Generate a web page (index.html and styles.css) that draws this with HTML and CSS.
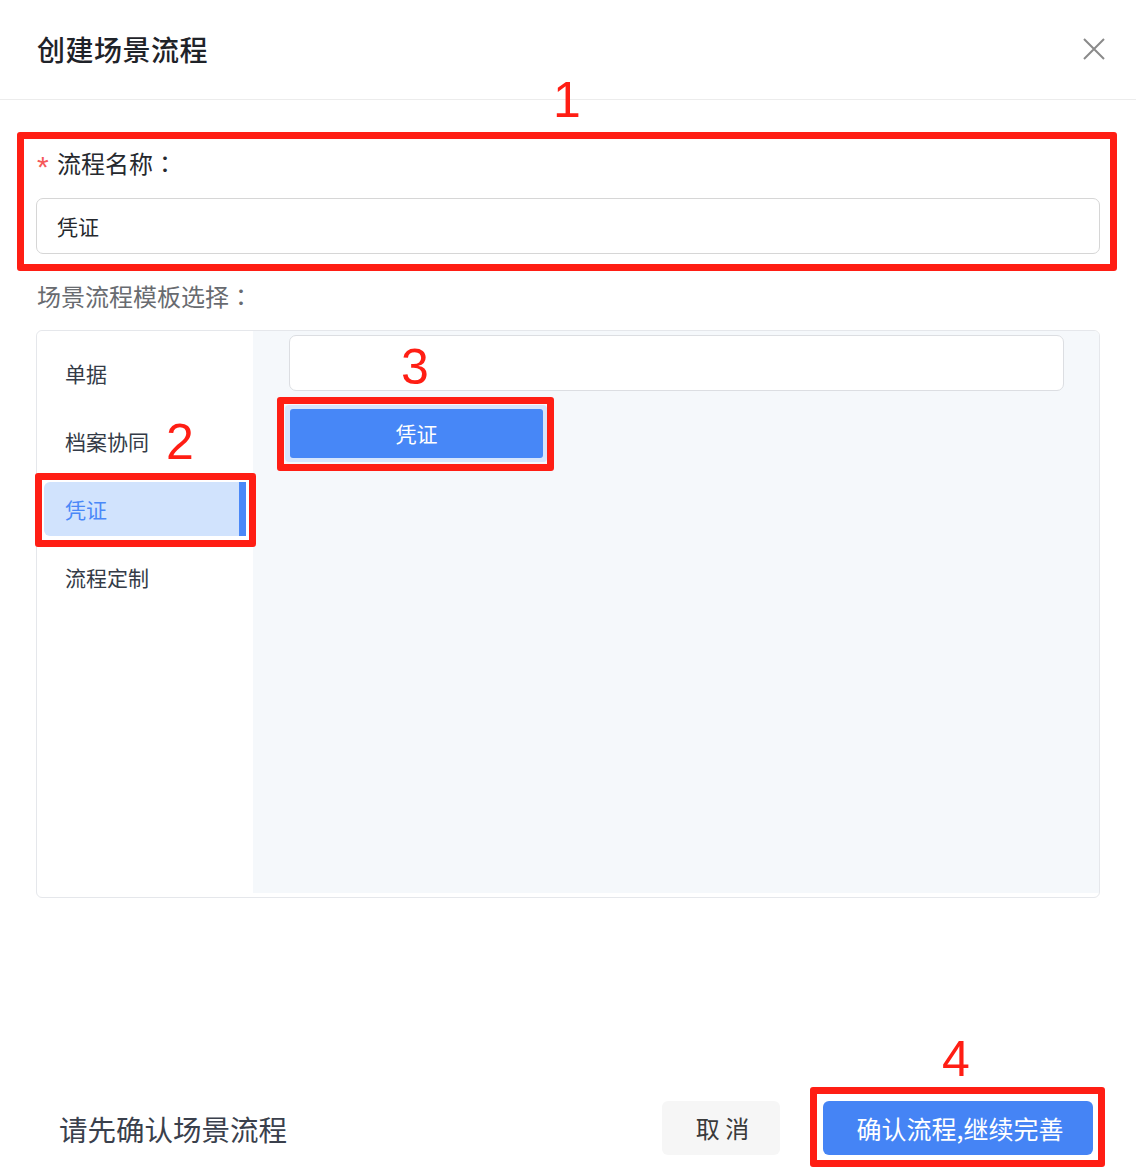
FILE: index.html
```html
<!DOCTYPE html>
<html lang="zh">
<head>
<meta charset="utf-8">
<title>创建场景流程</title>
<link rel="stylesheet" href="styles.css">
</head>
<body>
<div class="dialog">
  <div class="header">
    <div class="title">创建场景流程</div>
    <svg class="close" width="22" height="22" viewBox="0 0 22 22"><path d="M1 1L21 21M21 1L1 21" stroke="#8a8a8a" stroke-width="2" fill="none"/></svg>
  </div>

  <div class="body">
    <div class="label label-required"><span class="star">*</span>流程名称<span class="colon">：</span></div>
    <div class="input">凭证</div>

    <div class="label label-sub">场景流程模板选择<span class="colon">：</span></div>
    <div class="panel">
      <div class="side">
        <div class="side-item">单据</div>
        <div class="side-item">档案协同</div>
        <div class="side-item active">凭证</div>
        <div class="side-item">流程定制</div>
      </div>
      <div class="content">
        <div class="search"></div>
        <div class="tpl-wrap"><div class="tpl-btn">凭证</div></div>
      </div>
    </div>
  </div>

  <div class="footer">
    <div class="hint">请先确认场景流程</div>
    <div class="actions">
      <div class="btn btn-cancel">取 消</div>
      <div class="btn btn-primary">确认流程,继续完善</div>
    </div>
  </div>

  <div class="mark mark-box box1"></div>
  <div class="mark mark-box box2"></div>
  <div class="mark mark-box box3"></div>
  <div class="mark mark-box box4"></div>
  <div class="mark mark-num num1">1</div>
  <div class="mark mark-num num2">2</div>
  <div class="mark mark-num num3">3</div>
  <div class="mark mark-num num4">4</div>
</div>
</body>
</html>
```

FILE: styles.css
```css
* { box-sizing: border-box; }
html, body {
  margin: 0;
  padding: 0;
  background: #ffffff;
}
body {
  font-family: "Noto Sans CJK SC", "Noto Sans", sans-serif;
  color: #1f2329;
}
.dialog {
  position: relative;
  width: 1136px;
  height: 1176px;
  display: flex;
  flex-direction: column;
  overflow: hidden;
}
.header {
  height: 100px;
  border-bottom: 1px solid #ececec;
  display: flex;
  align-items: center;
  justify-content: space-between;
  padding: 0 31px 0 37px;
  flex: none;
}
.title {
  font-size: 28px;
  font-weight: 500;
  line-height: 40px;
  margin-top: -2px;
  color: #1f2329;
  letter-spacing: 0.5px;
}
.close { display: block; margin-top: -2px; }

.body {
  padding: 0 36px;
}
.label {
  font-size: 24px;
  line-height: 32px;
  height: 32px;
  display: flex;
  align-items: center;
}
.colon {
  font-family: "Noto Sans CJK TC", "Noto Sans CJK SC", sans-serif;
}
.label-required {
  margin-top: 47px;
  color: #26292e;
}
.star {
  color: #f5585a;
  font-family: "Liberation Sans", sans-serif;
  font-size: 30px;
  line-height: 30px;
  height: 30px;
  width: 21px;
  padding-left: 1px;
  margin-top: 8px;
}
.input {
  margin-top: 19px;
  height: 56px;
  border: 1px solid #d6d6d6;
  border-radius: 7px;
  padding-left: 20px;
  font-size: 21px;
  line-height: 54px;
  color: #26292e;
}
.label-sub {
  margin-top: 26px;
  color: #686b70;
  padding-left: 1px;
}
.panel {
  margin-top: 18px;
  height: 568px;
  border: 1px solid #e5e7eb;
  border-radius: 6px;
  display: flex;
  padding-bottom: 4px;
}
.side {
  width: 216px;
  flex: none;
  background: #ffffff;
  padding: 15px 7px 0 7px;
  display: flex;
  flex-direction: column;
  gap: 14px;
  border-radius: 6px 0 0 6px;
}
.side-item {
  height: 54px;
  line-height: 54px;
  font-size: 21px;
  color: #343b47;
  padding-left: 21px;
  border-radius: 6px 0 0 6px;
}
.side-item.active {
  background: #d1e3fd;
  color: #4a88f8;
  border-right: 7px solid #4a88f8;
}
.content {
  flex: 1;
  background: #f5f8fb;
  padding: 4px 35px 0 36px;
  border-top-right-radius: 5px;
}
.search {
  height: 56px;
  background: #ffffff;
  border: 1px solid #dcdee2;
  border-radius: 7px;
}
.tpl-wrap {
  margin-top: 14px;
  margin-left: -4px;
  width: 262px;
  padding: 4px;
  background: #d6e5fc;
  border-radius: 4px;
}
.tpl-btn {
  height: 49px;
  line-height: 49px;
  margin-left: 1px;
  width: 253px;
  background: #4787f7;
  color: #ffffff;
  font-size: 21px;
  text-align: center;
  border-radius: 3px;
}

.footer {
  margin-top: auto;
  margin-bottom: 21px;
  height: 54px;
  display: flex;
  align-items: center;
  justify-content: space-between;
  padding: 0 43px 0 59px;
}
.hint {
  font-size: 28.5px;
  color: #3a404c;
  line-height: 40px;
  margin-top: 2px;
}
.actions {
  display: flex;
  gap: 43px;
}
.btn {
  height: 54px;
  line-height: 54px;
  border-radius: 6px;
  font-size: 24px;
  text-align: center;
}
.btn-cancel {
  width: 118px;
  background: #f6f6f6;
  color: #3a3a3a;
  padding-left: 3px;
}
.btn-primary {
  width: 270px;
  background: #4584f5;
  color: #ffffff;
  font-size: 25px;
  padding-left: 4px;
}

.mark { position: absolute; }
.mark-box {
  border: 7px solid #ff1e14;
  border-radius: 3px;
}
.box1 { left: 17px; top: 132px; width: 1100px; height: 139px; }
.box2 { left: 35px; top: 473px; width: 221px; height: 74px; }
.box3 { left: 277px; top: 397px; width: 277px; height: 74px; }
.box4 { left: 810px; top: 1087px; width: 295px; height: 80px; }
.mark-num {
  font-family: "Liberation Sans", Arial, sans-serif;
  font-size: 50px;
  line-height: 50px;
  color: #ff1e14;
}
.num1 { left: 553px; top: 75px; }
.num2 { left: 166px; top: 417px; }
.num3 { left: 401px; top: 342px; }
.num4 { left: 942px; top: 1034px; }
```
